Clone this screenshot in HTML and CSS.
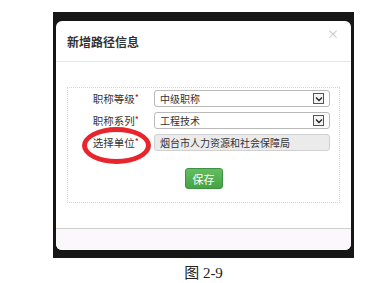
FILE: index.html
```html
<!DOCTYPE html>
<html>
<head>
    <title>新增路径信息</title>
    <link rel="stylesheet" href="styles.css">
</head>
<body>
    <div class="shot">
        <div class="dialog">
            <div class="dialog-header">
                <h3 class="dialog-title">新增路径信息</h3>
                <span class="close">×</span>
            </div>
            <div class="dialog-body">
                <div class="form-box">
                    <div class="row">
                        <label class="row-label">职称等级<em>*</em></label>
                        <div class="select">
                            <span>中级职称</span>
                            <span class="arrow"><svg width="8" height="6" viewBox="0 0 8 6"><path d="M1 1.5 L4 4.5 L7 1.5" fill="none" stroke="#223" stroke-width="1.4"/></svg></span>
                        </div>
                    </div>
                    <div class="row">
                        <label class="row-label">职称系列<em>*</em></label>
                        <div class="select">
                            <span>工程技术</span>
                            <span class="arrow"><svg width="8" height="6" viewBox="0 0 8 6"><path d="M1 1.5 L4 4.5 L7 1.5" fill="none" stroke="#223" stroke-width="1.4"/></svg></span>
                        </div>
                    </div>
                    <div class="row">
                        <label class="row-label">选择单位<em>*</em></label>
                        <div class="select readonly">
                            <span>烟台市人力资源和社会保障局</span>
                        </div>
                    </div>
                    <div class="actions">
                        <button class="btn-save">保存</button>
                    </div>
                </div>
            </div>
            <div class="dialog-footer"></div>
            <div class="mark"></div>
        </div>
    </div>
    <div class="caption">图 2-9</div>
</body>
</html>
```

FILE: styles.css
```css
body {
  margin: 0;
  background: #fff;
  font-family: "Noto Sans CJK SC", "Liberation Sans", sans-serif;
  color: #333;
}
.shot {
  width: 301px;
  margin: 12px 0 0 53px;
  padding: 9px 3px 8px 3px;
  box-sizing: border-box;
  background: #161616;
}
.dialog {
  position: relative;
  background: #fff;
  border-radius: 6px;
  overflow: hidden;
}
.dialog-header {
  display: flex;
  justify-content: space-between;
  height: 40px;
  padding: 0 12px 0 11px;
  border-bottom: 1px solid #e6e2e8;
}
.dialog-title {
  margin: 0;
  font-size: 12px;
  font-weight: bold;
  line-height: 42px;
  color: #333;
}
.close {
  font-size: 12px;
  line-height: 26px;
  color: #c4c4c8;
}
.dialog-body {
  padding: 25px 11px 25px 11px;
}
.form-box {
  height: 116px;
  box-sizing: border-box;
  border: 1px dotted #d6d6d6;
  padding: 2px 9px 0 0;
}
.row {
  display: flex;
  align-items: center;
  height: 17px;
  margin-bottom: 5px;
}
.row-label {
  width: 71px;
  margin-right: 15px;
  text-align: right;
  font-size: 10.5px;
  color: #333;
}
.row-label em {
  font-style: normal;
  color: #d00;
  font-size: 9px;
  vertical-align: top;
}
.select {
  display: flex;
  align-items: center;
  justify-content: space-between;
  flex: 1;
  height: 17px;
  box-sizing: border-box;
  border: 1px solid #b9b9b9;
  border-radius: 3px;
  padding: 0 5px;
  font-size: 10px;
  color: #333;
}
.select.readonly {
  background: #ebebeb;
  border-color: #d0d0d0;
}
.arrow {
  display: flex;
  align-items: center;
  justify-content: center;
  width: 9px;
  height: 9px;
  border: 1px solid #555;
  background: #f4f4f4;
}
.actions {
  display: flex;
  justify-content: center;
  padding: 12px 0 0 9px;
}
.btn-save {
  width: 38px;
  height: 21px;
  border: 1px solid #3d9140;
  border-radius: 3px;
  background: linear-gradient(#62bd5e, #46a446);
  color: #fff;
  font-family: inherit;
  font-size: 11px;
  padding: 0;
}
.dialog-footer {
  height: 21px;
  border-top: 1px solid #cfd0cc;
  background: #fbf8fb;
}
.mark {
  position: absolute;
  left: 26px;
  top: 106px;
  width: 69px;
  height: 37px;
  box-sizing: border-box;
  border: 5px solid #e8242c;
  border-radius: 50%;
}
.caption {
  width: 301px;
  margin: 3px 0 0 53px;
  text-align: center;
  font-family: "Liberation Serif", "Noto Sans CJK SC", serif;
  font-size: 15px;
  color: #222;
}
```
